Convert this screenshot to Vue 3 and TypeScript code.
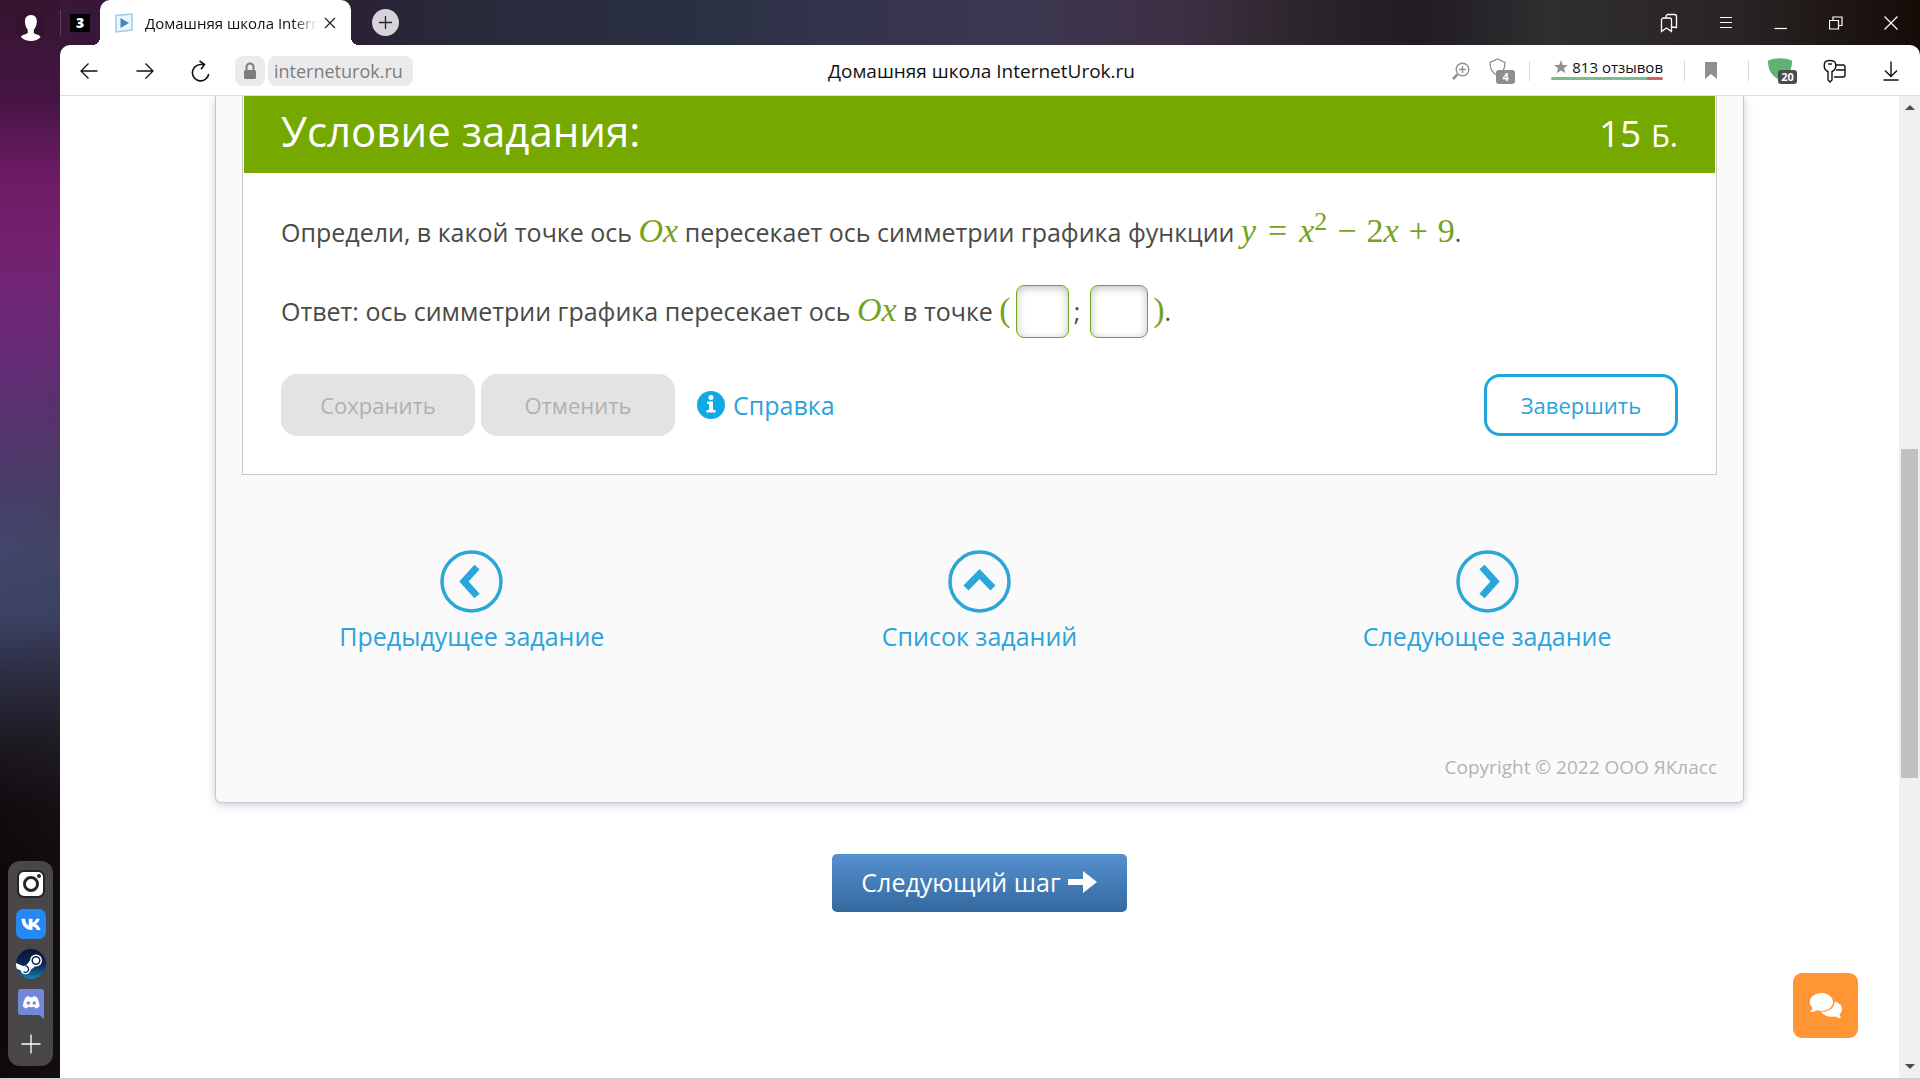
<script setup lang="ts">
import { ref } from 'vue'

interface TaskLink {
  label: string
  points: string
}

const taskLinks: TaskLink[] = [
  { label: 'Предыдущее задание', points: '37,17 24,31.5 37,46' },
  { label: 'Список заданий', points: '18,38 31.5,24 45,38' },
  { label: 'Следующее задание', points: '26,17 39,31.5 26,46' },
]

const coordX = ref('')
const coordY = ref('')
</script>

<template>
  <div class="browser">
    <aside class="sidebar">
      <button class="plain" aria-label="Профиль">
        <svg width="34" height="34" viewBox="0 0 34 34">
          <circle cx="17" cy="17" r="15" fill="#2b0f2a" opacity=".45" />
          <path d="M18 6c4.300 0 6 3 5.800 7-.2 3.600-1.500 6-3 7.500v3.500c1.500 1.500 6 1.500 6.700 4-2 2.500-5.500 4-9.500 4s-8-1.500-10-4c.5-2.500 5.200-2.500 6.700-4v-3.500c-1.500-1.500-2.500-3.900-2.700-7.500C11.700 9 13.700 6 18 6z" fill="#fff" />
        </svg>
      </button>
      <nav class="dock" aria-label="Панель сервисов">
        <button class="plain" aria-label="Instagram">
          <svg width="30" height="30" viewBox="0 0 30 30">
            <rect x="1" y="1" width="28" height="28" rx="7" fill="#262626" />
            <rect x="3" y="3" width="24" height="24" rx="5" fill="#fff" />
            <circle cx="15" cy="15" r="6.500" fill="none" stroke="#262626" stroke-width="3" />
            <circle cx="23" cy="7" r="2" fill="#262626" />
          </svg>
        </button>
        <button class="plain" aria-label="ВКонтакте">
          <svg width="30" height="30" viewBox="0 0 30 30">
            <rect width="30" height="30" rx="7" fill="#2787f5" />
            <path d="M15.800 21C9.500 21 6 16.800 5.400 9.700h3.700c.3 4.500 2.300 6.300 3.700 6.700V9.700h3.700v3.900c1.500-.2 3-1.900 3.600-3.900h3.600c-.5 2.500-2.400 4.400-3.800 5.200 1.400.7 3.800 2.600 4.800 6.100h-3.900c-.8-2-2.200-3.500-4.300-3.700V21z" fill="#fff" />
          </svg>
        </button>
        <button class="plain" aria-label="Steam">
          <svg width="30" height="30" viewBox="0 0 30 30">
            <defs>
              <linearGradient id="steam" x1="0" y1="0" x2="0" y2="1">
                <stop offset="0" stop-color="#0a1433" />
                <stop offset=".55" stop-color="#0b2a5b" />
                <stop offset="1" stop-color="#1387b8" />
              </linearGradient>
              <clipPath id="steam-disc"><circle cx="15" cy="15" r="15" /></clipPath>
            </defs>
            <g clip-path="url(#steam-disc)">
              <rect width="30" height="30" fill="url(#steam)" />
              <path d="M0 14l7 3 3-.5 4-5 5 6-4.500 3.500a5 5 0 0 1-9.800.5L0 19.500z" fill="#fff" />
              <circle cx="20" cy="11.500" r="6" fill="#fff" />
              <circle cx="20" cy="11.500" r="3.800" fill="none" stroke="#0c2350" stroke-width="1.500" />
              <path d="M7.500 22.800a3.200 3.200 0 1 0 2-5.800" fill="none" stroke="#0c2350" stroke-width="1.300" />
            </g>
          </svg>
        </button>
        <button class="plain" aria-label="Discord">
          <svg width="30" height="30" viewBox="0 0 30 30">
            <path d="M5 0h20a3 3 0 0 1 3 3v27l-5-4H5a3 3 0 0 1-3-3V3a3 3 0 0 1 3-3z" fill="#7289da" />
            <path d="M10 8l3-1 .7 1.200h3L17.500 7l3 1c2 2.500 3 6 3 9.500-1.200 1.200-2.500 1.800-4 2l-1.200-1.700c-2 .5-4 .5-6 0L11 19.500c-1.500-.2-3-.8-4-2 0-3.500 1-7 3-9.500z" fill="#fff" />
            <circle cx="12.300" cy="14" r="1.700" fill="#7289da" />
            <circle cx="18.200" cy="14" r="1.700" fill="#7289da" />
          </svg>
        </button>
        <button class="plain" aria-label="Добавить">
          <svg width="30" height="30" viewBox="0 0 30 30" stroke="#fff" stroke-width="1.300">
            <path d="M5.500 15h19M15 5.500v19" />
          </svg>
        </button>
      </nav>
    </aside>

    <div class="window">
      <header class="tabstrip">
        <button class="tab-group">3</button>
        <div class="tab">
          <svg width="18" height="20" viewBox="0 0 18 20">
            <path d="M1 2.500L17 1v16L1 19z" fill="#eef6fc" stroke="#9ccbe8" stroke-width="1.500" />
            <path d="M5.500 5v10l8.500-5z" fill="#4687c2" />
          </svg>
          <span class="tab-title">Домашняя школа InternetUrok.ru</span>
          <button class="plain" aria-label="Закрыть вкладку">
            <svg width="12" height="12" viewBox="0 0 12 12" stroke="#222" stroke-width="1.200"><path d="M1 1l10 10M11 1L1 11" /></svg>
          </button>
        </div>
        <button class="new-tab" aria-label="Новая вкладка">
          <svg width="15" height="15" viewBox="0 0 15 15" stroke="#222" stroke-width="1.300"><path d="M1 7.500h13M7.500 1v13" /></svg>
        </button>
        <div class="window-controls">
          <button class="plain" aria-label="Закладки">
            <svg width="18" height="20" viewBox="0 0 18 20" fill="none" stroke="#fff" stroke-width="1.300">
              <path d="M1.500 7a2 2 0 0 1 2-2h6a2 2 0 0 1 2 2v11.500l-5-3.500-5 3.500z" />
              <path d="M6 5V3.500a2 2 0 0 1 2-2h6.500a2 2 0 0 1 2 2V14.500l-5-.5" />
            </svg>
          </button>
          <button class="plain" aria-label="Меню">
            <svg width="14" height="14" viewBox="0 0 14 14" stroke="#fff" stroke-width="1.200"><path d="M1 1.500h12M1 6.500h12M1 11.500h12" /></svg>
          </button>
          <button class="plain" aria-label="Свернуть">
            <svg width="14" height="14" viewBox="0 0 14 14" stroke="#fff" stroke-width="1.200"><path d="M.5 12.500H13" /></svg>
          </button>
          <button class="plain" aria-label="Восстановить">
            <svg width="14" height="14" viewBox="0 0 14 14" fill="none" stroke="#fff" stroke-width="1.200"><path d="M.5 4.500h9V13h-9zM4 4V1h9v8.500h-3" /></svg>
          </button>
          <button class="plain" aria-label="Закрыть">
            <svg width="14" height="14" viewBox="0 0 14 14" stroke="#fff" stroke-width="1.200"><path d="M.5.5l13 13M13.500.5l-13 13" /></svg>
          </button>
        </div>
      </header>

      <div class="toolbar-back">
        <div class="toolbar">
          <div class="nav-side">
            <button class="plain nav-button" aria-label="Назад">
              <svg width="18" height="18" viewBox="0 0 18 18" fill="none" stroke="#111" stroke-width="1.300"><path d="M17.500 9H1M8.500 1.500L1 9l7.500 7.500" /></svg>
            </button>
            <button class="plain nav-button forward" aria-label="Вперёд">
              <svg width="18" height="18" viewBox="0 0 18 18" fill="none" stroke="#111" stroke-width="1.300"><path d="M.5 9H17M9.500 1.500L17 9l-7.500 7.500" /></svg>
            </button>
            <button class="plain nav-button reload" aria-label="Обновить">
              <svg width="20" height="22" viewBox="0 0 20 22" fill="none" stroke="#111" stroke-width="1.600"><path d="M13 4.500H9.500a8.200 8.200 0 1 0 8.200 9.500M8.500 .8l5 3.700-3.500 4.700" /></svg>
            </button>
            <button class="lock" aria-label="Сведения о сайте">
              <svg width="14" height="18" viewBox="0 0 14 18"><rect x="1" y="8" width="12" height="9" rx="1.500" fill="#7d7d7d" /><path d="M3.500 8V5a3.500 3.500 0 0 1 7 0v3" fill="none" stroke="#7d7d7d" stroke-width="2" /></svg>
            </button>
            <a class="host" href="#">interneturok.ru</a>
          </div>
          <div class="page-title">Домашняя школа InternetUrok.ru</div>
          <div class="tool-side">
            <button class="plain" aria-label="Масштаб">
              <svg width="18" height="18" viewBox="0 0 18 18" fill="none" stroke="#909090" stroke-width="1.400"><circle cx="10.500" cy="7.500" r="6.300" /><path d="M7 7.500h7M10.500 4v7" /><path d="M5.500 12.500L1 17" stroke-width="2.600" /></svg>
            </button>
            <button class="plain badge-icon" aria-label="Защита">
              <svg width="26" height="26" viewBox="0 0 26 26"><path d="M8.500 1l7.500 3.500c0 6-2 10.500-7.500 13C3 15 1 10.500 1 4.500z" fill="none" stroke="#909090" stroke-width="1.300" /></svg>
              <span class="badge">4</span>
            </button>
            <span class="divider"></span>
            <a class="reviews" href="#">
              <span class="reviews-text">
                <svg width="14" height="14" viewBox="0 0 14 14"><path d="M7 0l1.800 4.900 5.200.2-4.100 3.200 1.400 5L7 10.400l-4.300 2.900 1.400-5L0 5.100l5.200-.2z" fill="#909090" /></svg>
                <span>813 отзывов</span>
              </span>
              <span class="rating"></span>
            </a>
            <span class="divider"></span>
            <button class="plain bookmark" aria-label="Добавить в закладки">
              <svg width="14" height="17" viewBox="0 0 14 17"><path d="M1 0h12v17l-6-5-6 5z" fill="#909090" /></svg>
            </button>
            <span class="divider"></span>
            <button class="plain badge-icon" aria-label="Блокировщик">
              <svg width="29" height="26" viewBox="0 0 29 26"><path d="M0 2.500Q12-2 24 2.500C24 12 21 18 12 22 3 18 0 12 0 2.500z" fill="#5fb272" /></svg>
              <span class="badge dark">20</span>
            </button>
            <button class="plain keys" aria-label="Пароли">
              <svg width="24" height="24" viewBox="0 0 24 24" fill="none" stroke="#111" stroke-width="1.400"><path d="M5 12.500C1 11 1 7 1.500 4.500 2 2 4 1.500 7 1.500s5 .5 5.500 3c.5 2.500.5 6.500-3.500 8V21l-2 2-2-2z" /><path d="M5 5h4" /><path d="M12.500 6H20a2 2 0 0 1 2 2v8a2 2 0 0 1-2 2h-9M13 11h9" /></svg>
            </button>
            <button class="plain download" aria-label="Загрузки">
              <svg width="16" height="20" viewBox="0 0 16 20" fill="none" stroke="#111" stroke-width="1.400"><path d="M8 .5V15M2 9.500L8 15.500l6-6M.5 19h15" /></svg>
            </button>
          </div>
        </div>
      </div>

      <div class="viewport">
        <main class="page">
          <section class="card">
            <article class="task">
              <header class="task-header">
                <h1>Условие задания:</h1>
                <span class="score">15 <small>Б.</small></span>
              </header>
              <div class="task-body">
                <p>Определи, в какой точке ось <i class="math">Ox</i> пересекает ось симметрии графика функции <span class="math"><i>y</i><span class="rel">=</span><i>x</i><sup>2</sup><span class="op">−</span>2<i>x</i><span class="op">+</span>9</span>.</p>
                <p class="answer">Ответ: ось симметрии графика пересекает ось <i class="math">Ox</i> в точке <span class="math">(</span><input v-model="coordX" type="text" aria-label="Абсцисса" /><span class="semicolon">;</span><input v-model="coordY" class="wide" type="text" aria-label="Ордината" /><span class="math">)</span>.</p>
                <div class="actions">
                  <button class="action" disabled>Сохранить</button>
                  <button class="action" disabled>Отменить</button>
                  <a class="help" href="#">
                    <svg width="28" height="28" viewBox="0 0 28 28"><circle cx="14" cy="14" r="14" fill="#0fa9e6" /><circle cx="14" cy="6.500" r="2.500" fill="#fff" /><path d="M10 10.500h6v8.500h2.500v2.500h-9v-2.500H12V13h-2z" fill="#fff" /></svg>
                    Справка
                  </a>
                  <button class="action finish">Завершить</button>
                </div>
              </div>
            </article>

            <nav class="task-nav" aria-label="Навигация по заданиям">
              <a v-for="link in taskLinks" :key="link.label" href="#">
                <svg width="63" height="63" viewBox="0 0 63 63" fill="none" stroke="#2ba6da">
                  <circle cx="31.500" cy="31.500" r="29.500" stroke-width="3.500" />
                  <polyline :points="link.points" stroke-width="7" />
                </svg>
                {{ link.label }}
              </a>
            </nav>
            <footer>Copyright © 2022 ООО ЯКласс</footer>
          </section>

          <button class="next-step">
            Следующий шаг
            <svg width="30" height="22" viewBox="0 0 30 22"><path d="M0 8h15V0l14 11-14 11v-8H0z" fill="#fff" /></svg>
          </button>

          <button class="chat" aria-label="Чат">
            <svg width="34" height="26" viewBox="0 0 34 26" fill="#fff">
              <path d="M25.500 8.500c4.500 1 7.500 4 7.500 7.500 0 2-1 4-2.500 5.300.2 1.500.8 2.700 1.900 3.700-2 .2-4-.4-5.600-1.600-5.500 1.400-12-.4-14.800-4.600 7.500.4 14-4 13.500-10.300z" />
              <path d="M12.500 0C19 0 24 4 24 9s-5 9-11.500 9c-1.600 0-3.100-.2-4.500-.7C6 18.600 3.500 19.300.5 19c1.500-1 2.600-2.500 3-4.100C1.800 13.300.8 11.300.8 9c0-5 5.200-9 11.700-9z" />
            </svg>
          </button>
        </main>
        <div class="scrollbar" aria-hidden="true">
          <svg width="12" height="7" viewBox="0 0 12 7"><path d="M1 6h10L6 1z" fill="#4d4d4d" /></svg>
          <div class="track"><div class="thumb"></div></div>
          <svg width="12" height="7" viewBox="0 0 12 7"><path d="M1 1h10L6 6z" fill="#4d4d4d" /></svg>
        </div>
      </div>
    </div>
  </div>
</template>

<style>
body {
  margin: 0;
}
</style>

<style scoped>
.browser {
  display: flex;
  min-height: 100vh;
  box-sizing: border-box;
  border-bottom: 2px solid #d0d0d0;
  font-family: "Open Sans", "Noto Sans", sans-serif;
}
button {
  font: inherit;
  cursor: pointer;
}
a {
  text-decoration: none;
}
svg {
  display: block;
  flex: none;
}
.plain {
  display: flex;
  padding: 0;
  border: 0;
  background: none;
}

.sidebar {
  position: relative;
  flex: none;
  display: flex;
  flex-direction: column;
  justify-content: space-between;
  align-items: center;
  width: 60px;
  padding: 9px 0 12px;
  box-sizing: border-box;
  background:
    linear-gradient(100deg, transparent 40%, rgba(60, 50, 60, .25)),
    linear-gradient(#35152f 0, #451543 9%, #6c1a63 16%, #75206f 22%, #6b2877 30%, #5c2f71 37%, #4a3b68 44%, #42466a 51%, #3c4366 57%, #2a2c40 63%, #1a171f 69%, #0e080c 75%, #070304 82%, #050203);
}
.sidebar::after {
  content: "";
  position: absolute;
  top: 10px;
  right: -1px;
  width: 1px;
  height: 25px;
  background: #5d4259;
}
.dock {
  display: flex;
  flex-direction: column;
  gap: 10px;
  margin-left: 1px;
  padding: 8px 7px 7px 8px;
  border-radius: 12px;
  background: #484647;
}

.window {
  flex: 1;
  min-width: 0;
  display: flex;
  flex-direction: column;
}
.tabstrip {
  display: flex;
  align-items: center;
  height: 45px;
  background: linear-gradient(90deg, #39163a 0, #35193a 8%, #2a2234 16%, #282a3a 22%, #2a3143 35%, #35344d 42%, #3b3750 52%, #3f3045 60%, #2c252b 67%, #201c22 73%, #302e31 80%, #292425 90%, #160c08 100%);
}
.tab-group {
  width: 20px;
  height: 18px;
  margin: 0 10px;
  padding: 0;
  border: 0;
  background: #000;
  color: #fff;
  font-size: 14px;
  font-weight: 800;
  line-height: 18px;
}
.tab {
  position: relative;
  display: flex;
  align-items: center;
  gap: 12px;
  width: 251px;
  height: 45px;
  padding: 0 15px;
  box-sizing: border-box;
  border-radius: 10px 10px 0 0;
  background: #fff;
}
.tab::before,
.tab::after {
  content: "";
  position: absolute;
  bottom: 0;
  width: 8px;
  height: 8px;
}
.tab::before {
  right: 100%;
  background: radial-gradient(circle at 0 0, transparent 8px, #fff 8px);
}
.tab::after {
  left: 100%;
  background: radial-gradient(circle at 100% 0, transparent 8px, #fff 8px);
}
.tab-title {
  flex: 1;
  overflow: hidden;
  white-space: nowrap;
  font-size: 15px;
  line-height: 24px;
  color: #111;
  mask-image: linear-gradient(90deg, #000 85%, transparent);
}
.tab .plain {
  margin-left: -6px;
}
.new-tab {
  display: grid;
  place-items: center;
  width: 27px;
  height: 27px;
  margin-left: 21px;
  padding: 0;
  border: 0;
  border-radius: 50%;
  background: #d6d4d8;
}
.window-controls {
  display: flex;
  gap: 41px;
  align-items: center;
  margin-left: auto;
  padding-right: 22px;
}

.toolbar-back {
  background: linear-gradient(90deg, #39163a 50%, #160c08 50%);
}
.toolbar {
  display: grid;
  grid-template-columns: 1fr auto 1fr;
  align-items: center;
  height: 51px;
  padding: 1px 17px 0 0;
  box-sizing: border-box;
  border-bottom: 1px solid #ddd;
  border-radius: 10px 10px 0 0;
  background: #fff;
}
.nav-side {
  display: flex;
  align-items: center;
  padding-left: 20px;
}
.nav-button {
  width: 56px;
}
.forward {
  width: 55px;
}
.reload {
  width: 44px;
}
.lock {
  display: grid;
  place-items: center;
  width: 30px;
  height: 30px;
  padding: 0;
  border: 0;
  border-radius: 8px;
  background: #ebebeb;
}
.host {
  margin-left: 3px;
  padding: 0 10px 0 6px;
  border-radius: 8px;
  background: #ebebeb;
  color: #7d7d7d;
  font-size: 18px;
  line-height: 30px;
}
.page-title {
  font-size: 19px;
  line-height: 30px;
  color: #111;
}
.tool-side {
  display: flex;
  align-items: center;
  justify-content: flex-end;
  gap: 19px;
  padding-right: 4px;
}
.badge-icon {
  position: relative;
}
.tool-side > .divider {
  width: 1px;
  height: 20px;
  margin-left: -5px;
  background: #d8d8d8;
}
.badge {
  position: absolute;
  right: 0;
  bottom: 0;
  min-width: 19px;
  border-radius: 3px;
  background: #8e8e8e;
  color: #fff;
  font-size: 11px;
  font-weight: 700;
  line-height: 14px;
  text-align: center;
}
.badge.dark {
  background: #4c4c4c;
}
.reviews {
  display: flex;
  flex-direction: column;
  margin: 0 7px 5px 2px;
  color: #111;
  font-size: 15px;
  line-height: 20px;
}
.reviews-text {
  display: flex;
  align-items: center;
  gap: 4px;
  padding-left: 3px;
}
.rating {
  height: 3px;
  border-radius: 2px;
  background: linear-gradient(90deg, #7cbb8c 86%, #cf6259 86%);
}
.bookmark {
  margin-right: 16px;
}
.keys {
  margin-left: 7px;
}
.download {
  margin-left: 17px;
}

.viewport {
  flex: 1;
  display: flex;
  background: #fff;
}
.page {
  position: relative;
  flex: 1;
  display: flex;
  flex-direction: column;
  align-items: center;
  padding: 0 32px;
}
.card {
  width: 100%;
  max-width: 1529px;
  padding: 0 26px 21px;
  box-sizing: border-box;
  border: 1px solid #c4c8cc;
  border-top: 0;
  border-radius: 0 0 6px 6px;
  background: #fafafa;
  box-shadow: 0 2px 8px rgba(90, 120, 150, .35);
  clip-path: inset(0 -20px -20px -20px);
}
.task {
  border: 1px solid #c8c8c8;
  border-top: 0;
  background: #fff;
}
.task-header {
  display: flex;
  justify-content: space-between;
  align-items: baseline;
  margin: 0 1px;
  padding: 5px 37px 8px;
  background: #75a900;
  color: #fff;
  line-height: 60px;
}
h1 {
  margin: 0;
  font-size: 42px;
  font-weight: 400;
}
.score {
  font-size: 37px;
}
.score small {
  font-size: 31px;
}
.task-body {
  padding: 29px 38px 38px;
  color: #4a4a46;
  font-size: 25px;
}
p {
  margin: 0;
  line-height: 60px;
}
.answer {
  margin: 19px 0 33px;
}
.math {
  color: #75a221;
  font-family: "Liberation Serif", serif;
  font-size: 34px;
  line-height: 34px;
}
.rel {
  margin: 0 12px;
}
.op {
  margin: 0 10px;
}
sup {
  font-size: 26px;
  line-height: 0;
  vertical-align: 12px;
}
input {
  width: 53px;
  height: 53px;
  margin: 0 5px;
  padding: 0 8px;
  box-sizing: border-box;
  border: 1px solid #75a221;
  border-radius: 8px;
  background: #fff;
  box-shadow: inset 0 2px 8px rgba(0, 0, 0, .25);
  color: inherit;
  font: inherit;
  vertical-align: baseline;
}
input.wide {
  width: 58px;
}
.semicolon {
  margin-right: 5px;
}
.actions {
  display: flex;
  align-items: center;
  gap: 6px;
}
.action {
  min-width: 194px;
  height: 62px;
  border: 0;
  border-radius: 16px;
  background: #e3e3e3;
  color: #b0b0b0;
  font-size: 22px;
}
.help {
  display: flex;
  align-items: center;
  gap: 8px;
  margin-left: 16px;
  color: #2ba3dc;
}
.finish {
  margin-left: auto;
  border: 3px solid #1ba7dc;
  background: #fff;
  color: #2ba3dc;
}
.task-nav {
  display: grid;
  grid-template-columns: repeat(3, 1fr);
  margin: 75px -24px 0;
}
.task-nav a {
  display: flex;
  flex-direction: column;
  align-items: center;
  gap: 6px;
  color: #2ba3dc;
  font-size: 25px;
  line-height: 34px;
}
footer {
  margin-top: 100px;
  color: #b3b3b3;
  font-size: 19px;
  line-height: 28px;
  text-align: right;
}
.next-step {
  display: flex;
  align-items: center;
  justify-content: center;
  gap: 7px;
  min-width: 295px;
  height: 58px;
  margin-top: 51px;
  padding: 0 0 2px;
  border: 0;
  border-radius: 5px;
  background: linear-gradient(#5590cf, #34699f);
  color: #fff;
  font-size: 25px;
}
.chat {
  position: absolute;
  right: 41px;
  bottom: 40px;
  display: grid;
  place-items: center;
  width: 65px;
  height: 65px;
  padding: 0;
  border: 0;
  border-radius: 9px;
  background: #ff9533;
}
.scrollbar {
  display: flex;
  flex-direction: column;
  align-items: center;
  gap: 12px;
  width: 21px;
  padding: 8px 0;
  box-sizing: border-box;
  background: #f0f0f0;
}
.track {
  flex: 1;
  width: 17px;
}
.thumb {
  height: 329px;
  margin-top: 326px;
  background: #c1c1c1;
}
</style>
